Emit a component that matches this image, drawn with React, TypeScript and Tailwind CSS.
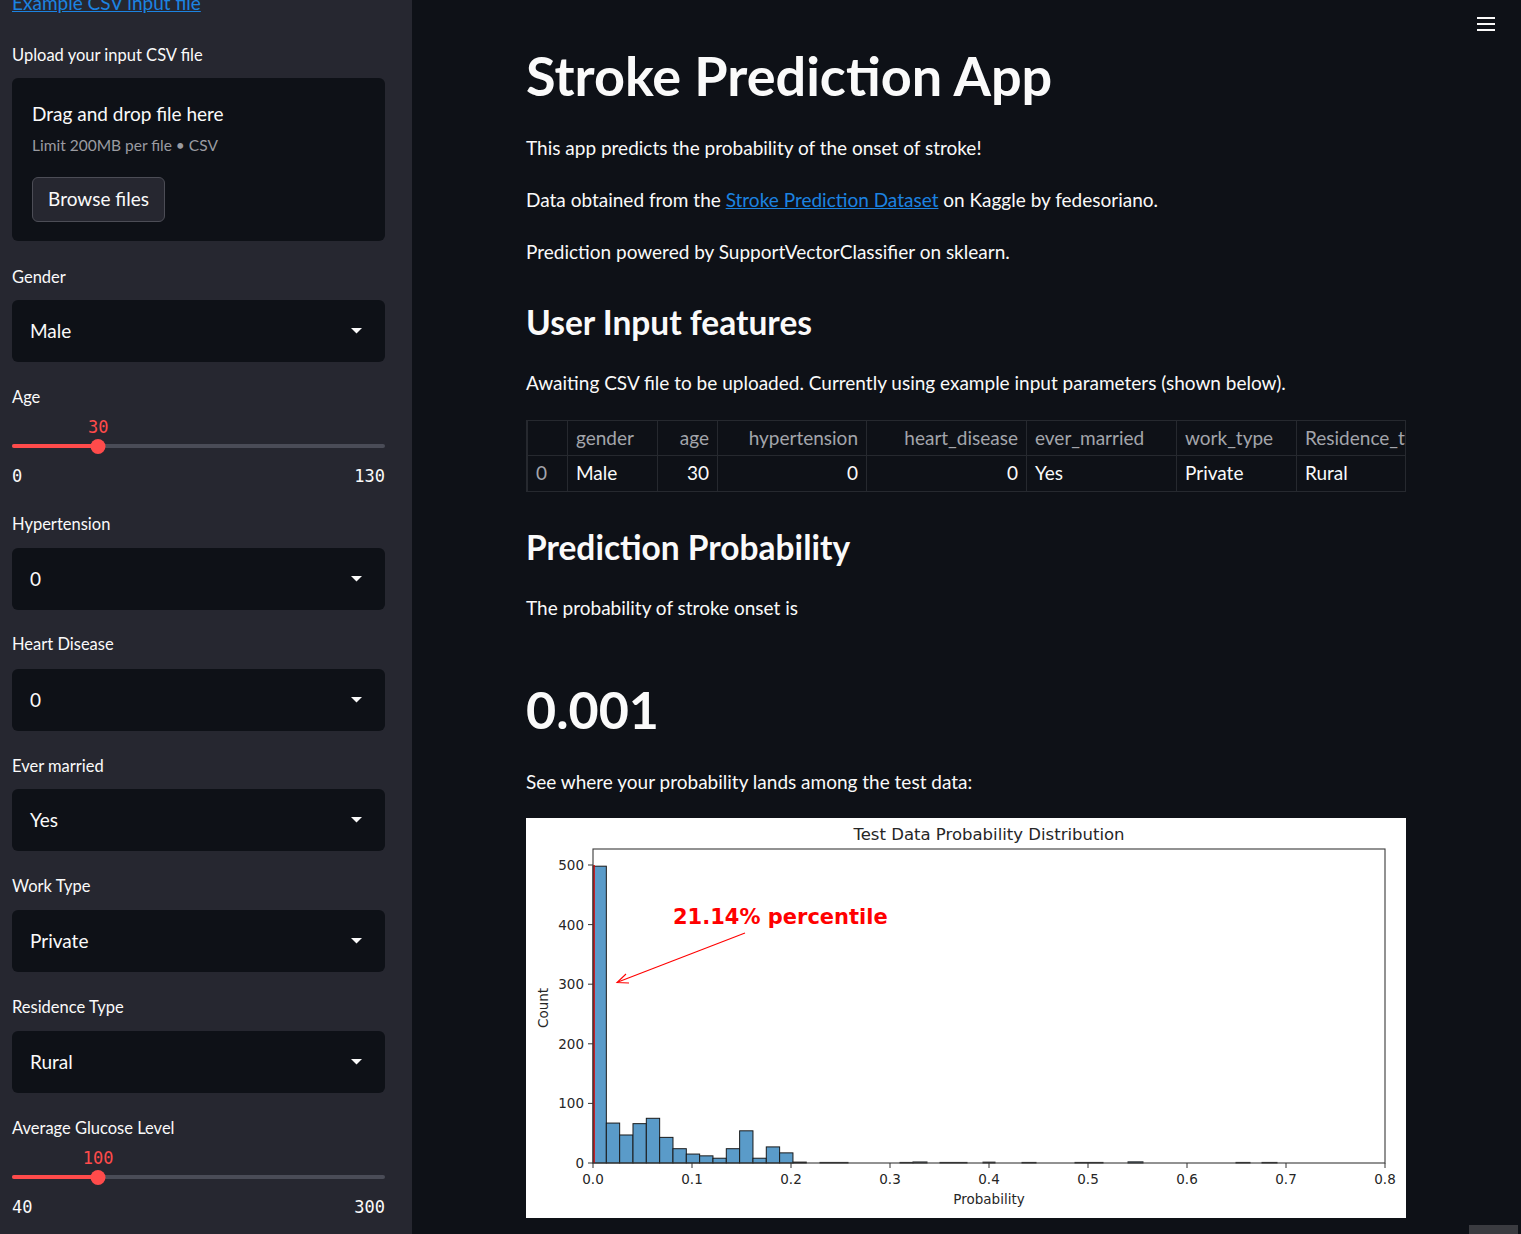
import React from "react";

const Caret = () => (
  <svg width="11" height="6" viewBox="0 0 11 6" className="block">
    <path d="M0 0 L11 0 L5.5 5.5 Z" fill="#fafafa" />
  </svg>
);

function Select({ label, value, mt, gap }: { label: string; value: string; mt: string; gap: string }) {
  return (
    <div className={mt}>
      <div className="h-6 leading-6 text-[16.5px]">{label}</div>
      <div className={`${gap} h-[62px] rounded-md bg-[#0e1117] flex items-center justify-between pl-[18px] pr-[23px] text-[19px]`}>
        <span>{value}</span>
        <Caret />
      </div>
    </div>
  );
}

function Slider({ label, value, min, max }: { label: string; value: string; min: string; max: string }) {
  return (
    <div className="mt-[23px]">
      <div className="h-6 leading-6 text-[16.5px]">{label}</div>
      <div className="relative h-[80px] [font-family:'DejaVu_Sans_Mono',monospace] text-[17px] font-light">
        <div className="absolute top-[7px] left-[23.1%] -translate-x-1/2 leading-[22px] text-[#ff4b4b]">{value}</div>
        <div className="absolute top-[35px] left-0 right-0 h-[4px] rounded-full bg-[#4a4c57]" />
        <div className="absolute top-[35px] left-0 w-[23.1%] h-[4px] rounded-full bg-[#ff4b4b]" />
        <div className="absolute top-[30px] left-[23.1%] -translate-x-1/2 w-[15px] h-[15px] rounded-full bg-[#ff4b4b]" />
        <div className="absolute top-[55px] left-0 right-0 flex justify-between leading-6">
          <span>{min}</span>
          <span>{max}</span>
        </div>
      </div>
    </div>
  );
}

function Chart() {
  const L = 67, R = 859, T = 31, B = 345;
  const xs = (v: number) => L + v * 990;
  const ys = (c: number) => B - c * 0.596;
  const bw = 13.33;
  const heights = [498, 67, 47, 66, 75, 43, 24, 15, 12, 8, 24, 54, 8, 27, 17, 1.5];
  const tiny: [number, number, number][] = [
    [820, 848, 1], [900, 913, 1], [913, 927, 1.8], [940, 967, 1],
    [983, 995, 1.5], [1022, 1036, 1], [1075, 1103, 1], [1128, 1143, 2],
    [1236, 1250, 1], [1262, 1277, 1],
  ];
  const xticks = [0, 0.1, 0.2, 0.3, 0.4, 0.5, 0.6, 0.7, 0.8];
  const yticks = [0, 100, 200, 300, 400, 500];
  return (
    <svg width="880" height="400" viewBox="0 0 880 400" className="block bg-white" style={{ fontFamily: "'DejaVu Sans', sans-serif" }}>
      <rect x="0" y="0" width="880" height="400" fill="#ffffff" />
      {heights.map((h, i) => (
        <rect key={i} x={L + i * bw} y={ys(h)} width={bw} height={B - ys(h)} fill="#5a9bc9" stroke="#1a1a1a" strokeWidth="1" />
      ))}
      {tiny.map(([a, b, h], i) => (
        <rect key={"t" + i} x={a - 526} y={ys(h)} width={b - a} height={B - ys(h)} fill="#5a9bc9" stroke="#333" strokeWidth="1" />
      ))}
      <line x1={xs(0.001)} y1={B} x2={xs(0.001)} y2={ys(500)} stroke="#d00" strokeWidth="1.6" />
      <rect x={L} y={T} width={R - L} height={B - T} fill="none" stroke="#3a3a3a" strokeWidth="1.1" />
      {xticks.map((t) => (
        <g key={t}>
          <line x1={xs(t)} y1={B} x2={xs(t)} y2={B + 5} stroke="#333" strokeWidth="1" />
          <text x={xs(t)} y={B + 21} textAnchor="middle" fontSize="13.5" fill="#262626">{t.toFixed(1)}</text>
        </g>
      ))}
      {yticks.map((t) => (
        <g key={t}>
          <line x1={L - 5} y1={ys(t)} x2={L} y2={ys(t)} stroke="#333" strokeWidth="1" />
          <text x={L - 9} y={ys(t) + 5} textAnchor="end" fontSize="13.5" fill="#262626">{t}</text>
        </g>
      ))}
      <text x={463} y={22} textAnchor="middle" fontSize="16.5" fill="#262626">Test Data Probability Distribution</text>
      <text x={463} y={386} textAnchor="middle" fontSize="13.5" fill="#262626">Probability</text>
      <text x={0} y={0} textAnchor="middle" fontSize="13.5" fill="#262626" transform="translate(22,190) rotate(-90)">Count</text>
      <text x={147} y={106} fontSize="21" fontWeight="bold" fill="#ff0000">21.14% percentile</text>
      <line x1={219} y1={115} x2={92} y2={164} stroke="#ff0000" strokeWidth="1.1" />
      <path d="M100 156 L91 164.5 L103 165" fill="none" stroke="#ff0000" strokeWidth="1.1" />
    </svg>
  );
}

export default function App() {
  const cols = [
    { h: "", v: "0", w: "w-[40px]", hr: false, vr: false, idx: true },
    { h: "gender", v: "Male", w: "w-[90px]", hr: false, vr: false },
    { h: "age", v: "30", w: "w-[60px]", hr: true, vr: true },
    { h: "hypertension", v: "0", w: "w-[149px]", hr: true, vr: true },
    { h: "heart_disease", v: "0", w: "w-[160px]", hr: true, vr: true },
    { h: "ever_married", v: "Yes", w: "w-[150px]", hr: false, vr: false },
    { h: "work_type", v: "Private", w: "w-[120px]", hr: false, vr: false },
    { h: "Residence_type", v: "Rural", w: "w-[160px]", hr: false, vr: false },
  ];
  return (
    <div className="flex w-[1521px] h-[1234px] overflow-hidden bg-[#0e1117] text-[#fafafa] [font-family:Lato,'Noto_Sans',sans-serif]">
      {/* Sidebar */}
      <aside className="w-[412px] shrink-0 h-full bg-[#262730] pl-3 pr-[27px] overflow-hidden">
        <div className="-mt-[9px] h-6 leading-6 text-[19px]">
          <a className="text-[#1c83e1] underline">Example CSV input file</a>
        </div>
        <div className="mt-[28px] h-6 leading-6 text-[16.5px]">Upload your input CSV file</div>
        <div className="mt-[11px] h-[163px] rounded-md bg-[#0e1117] pl-5 pt-[22px]">
          <div className="h-7 leading-7 text-[19px]">Drag and drop file here</div>
          <div className="mt-[5px] h-6 leading-6 text-[15.5px] text-[#9a9ba1]">Limit 200MB per file • CSV</div>
          <div className="mt-[20px] w-[133px] h-[45px] rounded-md border border-[#4c4d56] bg-[#262730] flex items-center justify-center text-[19px]">
            Browse files
          </div>
        </div>
        <Select label="Gender" value="Male" mt="mt-[24px]" gap="mt-[11px]" />
        <Slider label="Age" value="30" min="0" max="130" />
        <Select label="Hypertension" value="0" mt="mt-[23px]" gap="mt-[12px]" />
        <Select label="Heart Disease" value="0" mt="mt-[22px]" gap="mt-[13px]" />
        <Select label="Ever married" value="Yes" mt="mt-[23px]" gap="mt-[11px]" />
        <Select label="Work Type" value="Private" mt="mt-[23px]" gap="mt-[12px]" />
        <Select label="Residence Type" value="Rural" mt="mt-[23px]" gap="mt-[12px]" />
        <Slider label="Average Glucose Level" value="100" min="40" max="300" />
      </aside>

      {/* Main */}
      <main className="relative flex-1 h-full">
        <button className="absolute top-[17px] right-[26px] w-[18px] flex flex-col gap-[4px]">
          <span className="block h-[2px] bg-[#fafafa]" />
          <span className="block h-[2px] bg-[#fafafa]" />
          <span className="block h-[2px] bg-[#fafafa]" />
        </button>
        <div className="absolute bottom-0 right-[3px] w-[49px] h-[9px] bg-[#3a3b40]" />

        <div className="ml-[114px] w-[880px] pt-[44px]">
          <h1 className="h-[63px] leading-[63px] text-[54px] font-bold">Stroke Prediction App</h1>
          <p className="mt-[27px] leading-7 text-[19px]">This app predicts the probability of the onset of stroke!</p>
          <p className="mt-[24px] leading-7 text-[19px]">
            Data obtained from the <a className="text-[#1c83e1] underline">Stroke Prediction Dataset</a> on Kaggle by fedesoriano.
          </p>
          <p className="mt-[24px] leading-7 text-[19px]">Prediction powered by SupportVectorClassifier on sklearn.</p>
          <h2 className="mt-[36px] h-10 leading-10 text-[33.5px] font-bold">User Input features</h2>
          <p className="mt-[27px] leading-7 text-[19px]">
            Awaiting CSV file to be uploaded. Currently using example input parameters (shown below).
          </p>
          <div className="mt-[23px] w-[880px] overflow-hidden border-l border-r border-[#26292f]">
            <table className="border-collapse text-[19px] table-fixed w-[929px]">
              <thead>
                <tr className="h-[35px]">
                  {cols.map((c, i) => (
                    <th key={i} className={`${c.w} border border-[#26292f] px-2 font-normal text-[#a3a5ab] whitespace-nowrap overflow-hidden ${c.hr ? "text-right" : "text-left"}`}>{c.h}</th>
                  ))}
                </tr>
              </thead>
              <tbody>
                <tr className="h-[36px]">
                  {cols.map((c, i) => (
                    <td key={i} className={`border border-[#26292f] px-2 ${c.idx ? "text-[#a3a5ab]" : ""} ${c.vr ? "text-right" : "text-left"}`}>{c.v}</td>
                  ))}
                </tr>
              </tbody>
            </table>
          </div>
          <h2 className="mt-[35px] h-10 leading-10 text-[33.5px] font-bold">Prediction Probability</h2>
          <p className="mt-[27px] leading-7 text-[19px]">The probability of stroke onset is</p>
          <div className="mt-[55px] h-16 leading-[64px] text-[52px] font-bold">0.001</div>
          <p className="mt-[27px] leading-7 text-[19px]">See where your probability lands among the test data:</p>
          <div className="mt-[22px]">
            <Chart />
          </div>
        </div>
      </main>
    </div>
  );
}
